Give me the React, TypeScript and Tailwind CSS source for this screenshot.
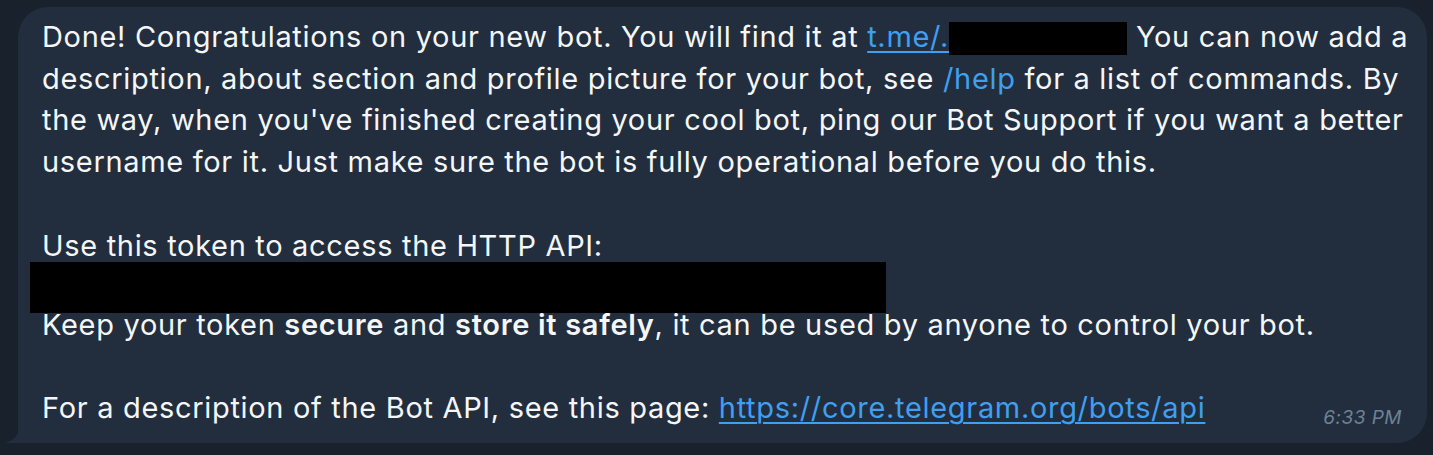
import React from "react";

const Link = ({ children }: { children: React.ReactNode }) => (
  <span className="text-[#3f9ff0] underline decoration-[1.5px] underline-offset-[4px]">{children}</span>
);

export default function App() {
  return (
    <div
      className="w-[1433px] h-[455px] bg-[#18212c] pt-[7px] pl-[18px]"
      style={{ fontFamily: "Inter, 'Liberation Sans', sans-serif" }}
    >
      <div className="relative w-[1409px] h-[436px] rounded-[30px] rounded-bl-none bg-[#222e3d] pl-[24px] pt-[9px] text-[29px] tracking-[0.68px] leading-[41.7px] text-[#f4f6f8]">
        <p className="whitespace-nowrap">
          Done! Congratulations on your new bot. You will find it at <Link>t.me/.</Link>
          <span className="inline-block w-[178px] h-[33px] bg-black align-[-8px]" /> You can now add a
          <br />
          description, about section and profile picture for your bot, see{" "}
          <span className="text-[#3f9ff0]">/help</span> for a list of commands. By
          <br />
          the way, when you've finished creating your cool bot, ping our Bot Support if you want a better
          <br />
          username for it. Just make sure the bot is fully operational before you do this.
        </p>
        <p className="h-[41.7px]" />
        <p>Use this token to access the HTTP API:</p>
        <div className="h-[41.7px]">
          <div className="-mt-[4px] -ml-[12px] w-[856px] h-[51px] bg-black" />
        </div>
        <p>
          Keep your token <span className="font-semibold">secure</span> and{" "}
          <span className="font-semibold">store it safely</span>, it can be used by anyone to control your bot.
        </p>
        <p className="h-[41.7px]" />
        <div className="flex items-baseline justify-between pr-[25px]">
          <p>
            For a description of the Bot API, see this page: <Link>https://core.telegram.org/bots/api</Link>
          </p>
          <span className="relative top-[6px] text-[19px] tracking-[0.5px] italic text-[#6e8296]">6:33 PM</span>
        </div>
        <svg
          className="absolute -left-[14px] bottom-0"
          width="16"
          height="14"
          viewBox="0 0 16 14"
        >
          <path d="M16 0 L16 14 L0 14 C6 13 11 10 14 4 Z" fill="#222e3d" />
        </svg>
      </div>
    </div>
  );
}
